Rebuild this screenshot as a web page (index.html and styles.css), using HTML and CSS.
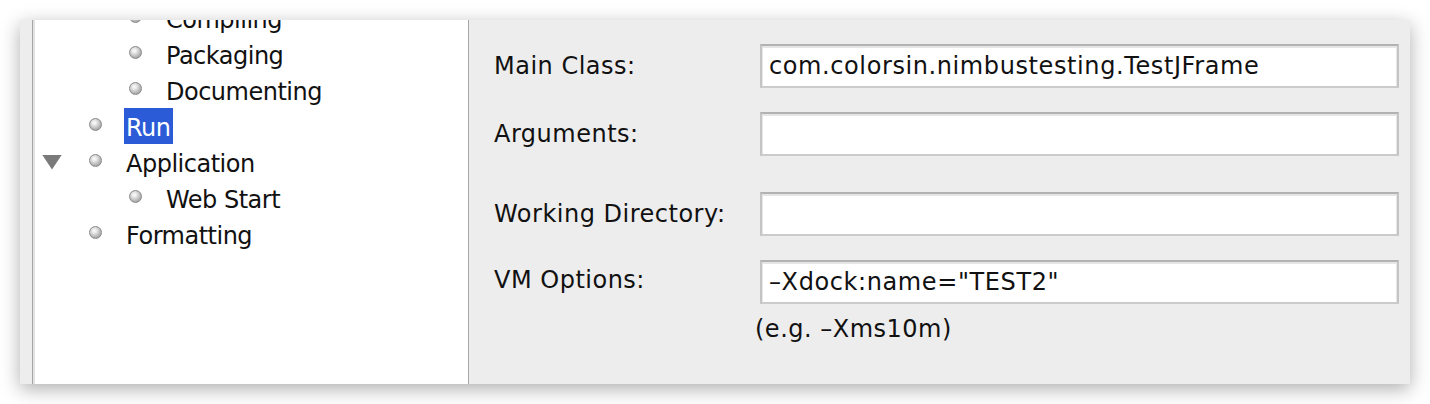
FILE: index.html
```html
<!DOCTYPE html>
<html lang="en">

<head>
    <meta charset="UTF-8">
    <meta name="viewport" content="width=device-width, initial-scale=1">
    <title>Project Properties - Run</title>
    <link rel="stylesheet" href="styles.css">
</head>

<body>
    <div class="window">
        <div class="gutter"></div>

        <div class="tree">
            <ul class="tree-list">
                <li class="node level-2"><span class="toggle"></span><span class="bullet"></span><span class="label">Compiling</span></li>
                <li class="node level-2"><span class="toggle"></span><span class="bullet"></span><span class="label">Packaging</span></li>
                <li class="node level-2"><span class="toggle"></span><span class="bullet"></span><span class="label">Documenting</span></li>
                <li class="node level-1"><span class="toggle"></span><span class="bullet"></span><span class="label selected">Run</span></li>
                <li class="node level-1"><span class="toggle open"></span><span class="bullet"></span><span class="label">Application</span></li>
                <li class="node level-2"><span class="toggle"></span><span class="bullet"></span><span class="label">Web Start</span></li>
                <li class="node level-1"><span class="toggle"></span><span class="bullet"></span><span class="label">Formatting</span></li>
            </ul>
        </div>

        <form class="settings" onsubmit="return false">
            <label class="field-label" for="mainClass">Main Class:</label>
            <input class="field" id="mainClass" type="text" value="com.colorsin.nimbustesting.TestJFrame">

            <label class="field-label row-2" for="args">Arguments:</label>
            <input class="field row-2" id="args" type="text" value="">

            <label class="field-label row-3" for="workDir">Working Directory:</label>
            <input class="field row-3" id="workDir" type="text" value="">

            <label class="field-label row-4" for="vmOptions">VM Options:</label>
            <input class="field row-4" id="vmOptions" type="text" value="&ndash;Xdock:name=&quot;TEST2&quot;">

            <div class="hint">(e.g. &ndash;Xms10m)</div>
        </form>
    </div>
</body>

</html>
```

FILE: styles.css
```css
body {
    margin: 0;
    padding: 20px;
    background: #ffffff;
    font-family: "DejaVu Sans", Verdana, sans-serif;
    font-size: 24px;
    color: #111;
}

.window {
    display: flex;
    width: 1390px;
    height: 364px;
    overflow: hidden;
    background: #ededed;
    box-shadow: 0 5px 18px rgba(0, 0, 0, 0.32);
}

.gutter {
    width: 12px;
    flex: none;
}

/* project tree */
.tree {
    width: 435px;
    flex: none;
    background: #fff;
    border-left: 1px solid #a6a6a6;
    border-right: 1px solid #a6a6a6;
    box-shadow: inset 2px 0 0 #e2e2e2;
    overflow: hidden;
}

.tree-list {
    list-style: none;
    margin: -20px 0 0;
    padding: 0;
}

.node {
    display: flex;
    align-items: center;
    height: 36px;
    padding-left: 9px;
}

.toggle {
    width: 20px;
    height: 15px;
    flex: none;
}

.toggle.open {
    background: #7a7a7a;
    clip-path: polygon(0 0, 100% 0, 50% 100%);
}

.bullet {
    width: 13px;
    height: 13px;
    flex: none;
    box-sizing: border-box;
    border-radius: 50%;
    margin-top: -4px;
    border: 1px solid #8a8a8a;
    background: radial-gradient(circle at 40% 35%, #ffffff 0, #e6e6e6 25%, #b8b8b8 60%, #8e8e8e 100%);
}

.level-1 .bullet {
    margin-left: 27px;
}

.level-2 .bullet {
    margin-left: 67px;
}

.label {
    margin-left: 22px;
    padding: 0 2px;
    height: 36px;
    line-height: 40px;
    letter-spacing: -0.5px;
    white-space: nowrap;
}

.label.selected {
    background: #2b5bd6;
    color: #fff;
}

/* run settings */
.settings {
    flex: 1;
    display: grid;
    grid-template-columns: 266px 1fr;
    align-content: start;
    align-items: center;
    padding: 24px 11px 0 25px;
    letter-spacing: 0.5px;
}

.field-label {
    white-space: nowrap;
}

.field {
    box-sizing: border-box;
    width: 100%;
    height: 44px;
    margin: 0;
    padding: 0 7px;
    font-family: inherit;
    font-size: 24px;
    letter-spacing: 0.6px;
    color: #111;
    background: #fff;
    border: 2px solid #c4c4c4;
    border-top-color: #b2b2b2;
    border-bottom-color: #cbcbcb;
    box-shadow: inset 0 1px 0 1px #e6e6e6;
    outline: none;
}

.row-2 {
    margin-top: 24px;
}

.row-3 {
    margin-top: 36px;
}

.row-4 {
    margin-top: 24px;
}

label.row-4 {
    margin-top: 20px;
}

.hint {
    grid-column: 2;
    margin: 11px 0 0 -5px;
    line-height: 28px;
}
```
